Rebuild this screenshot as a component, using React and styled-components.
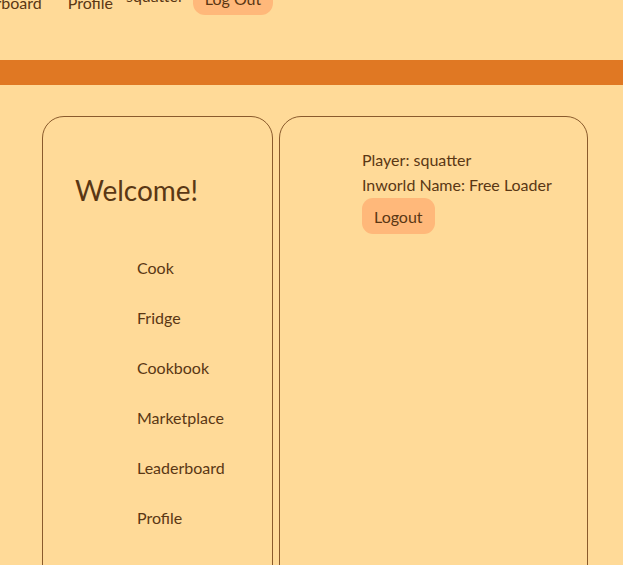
import React from 'react'
import styled, { createGlobalStyle } from 'styled-components'

const GlobalStyle = createGlobalStyle`
  html, body {
    margin: 0;
    padding: 0;
    background: #ffda98;
    overflow: hidden;
  }
  body {
    font-family: Lato, "Open Sans", sans-serif;
    color: #5a3714;
  }
`

const navItems = ['Cook', 'Fridge', 'Cookbook', 'Marketplace', 'Leaderboard', 'Profile']

function App() {
  return (
    <Page>
      <GlobalStyle />
      <Header>
        <TopLink>Leaderboard</TopLink>
        <TopLink>Profile</TopLink>
        <UserName>squatter</UserName>
        <TopButton>Log Out</TopButton>
      </Header>
      <Bar />
      <Main>
        <SideCard>
          <Welcome>Welcome!</Welcome>
          <NavList>
            {navItems.map((item) => (
              <NavItem key={item}>{item}</NavItem>
            ))}
          </NavList>
        </SideCard>
        <InfoCard>
          <InfoLine>Player: squatter</InfoLine>
          <InfoLine>Inworld Name: Free Loader</InfoLine>
          <LogoutButton>Logout</LogoutButton>
        </InfoCard>
      </Main>
    </Page>
  )
}

export default App

const Page = styled.div`
  width: 623px;
  height: 565px;
  overflow: hidden;
`

const Header = styled.div`
  height: 75px;
  margin-top: -15px;
  margin-left: -46px;
  display: flex;
  align-items: flex-start;
  padding-top: 8px;
  box-sizing: border-box;
`

const TopLink = styled.span`
  font-size: 16px;
  margin-right: 26px;
  line-height: 20px;
`

const UserName = styled.span`
  font-size: 16px;
  line-height: 20px;
  margin-left: -13px;
  margin-top: -7px;
  margin-right: 9px;
`

const TopButton = styled.button`
  font-family: inherit;
  font-size: 16px;
  color: #5a3714;
  background: #ffb87a;
  border: none;
  border-radius: 12px;
  padding: 0 12px;
  height: 34px;
  margin-top: -12px;
`

const Bar = styled.div`
  height: 25px;
  background: #e07823;
`

const Main = styled.div`
  display: flex;
  gap: 6px;
  padding: 31px 0 0 42px;
`

const Card = styled.div`
  border: 1px solid #8a5a2c;
  border-radius: 22px;
  height: 520px;
  box-sizing: border-box;
`

const SideCard = styled(Card)`
  width: 231px;
  padding: 56px 0 0 32px;
`

const Welcome = styled.h1`
  margin: 0;
  font-size: 28px;
  font-weight: 400;
  line-height: 34px;
`

const NavList = styled.div`
  display: flex;
  flex-direction: column;
  gap: 30px;
  margin: 51px 0 0 62px;
`

const NavItem = styled.span`
  font-size: 16px;
  line-height: 20px;
`

const InfoCard = styled(Card)`
  width: 309px;
  padding: 30px 0 0 82px;
  display: flex;
  flex-direction: column;
  align-items: flex-start;
`

const InfoLine = styled.span`
  font-size: 16px;
  line-height: 25px;
`

const LogoutButton = styled.button`
  font-family: inherit;
  font-size: 16px;
  color: #5a3714;
  background: #ffb87a;
  border: none;
  border-radius: 11px;
  height: 36px;
  padding: 0 12px;
  margin-top: 1px;
`
